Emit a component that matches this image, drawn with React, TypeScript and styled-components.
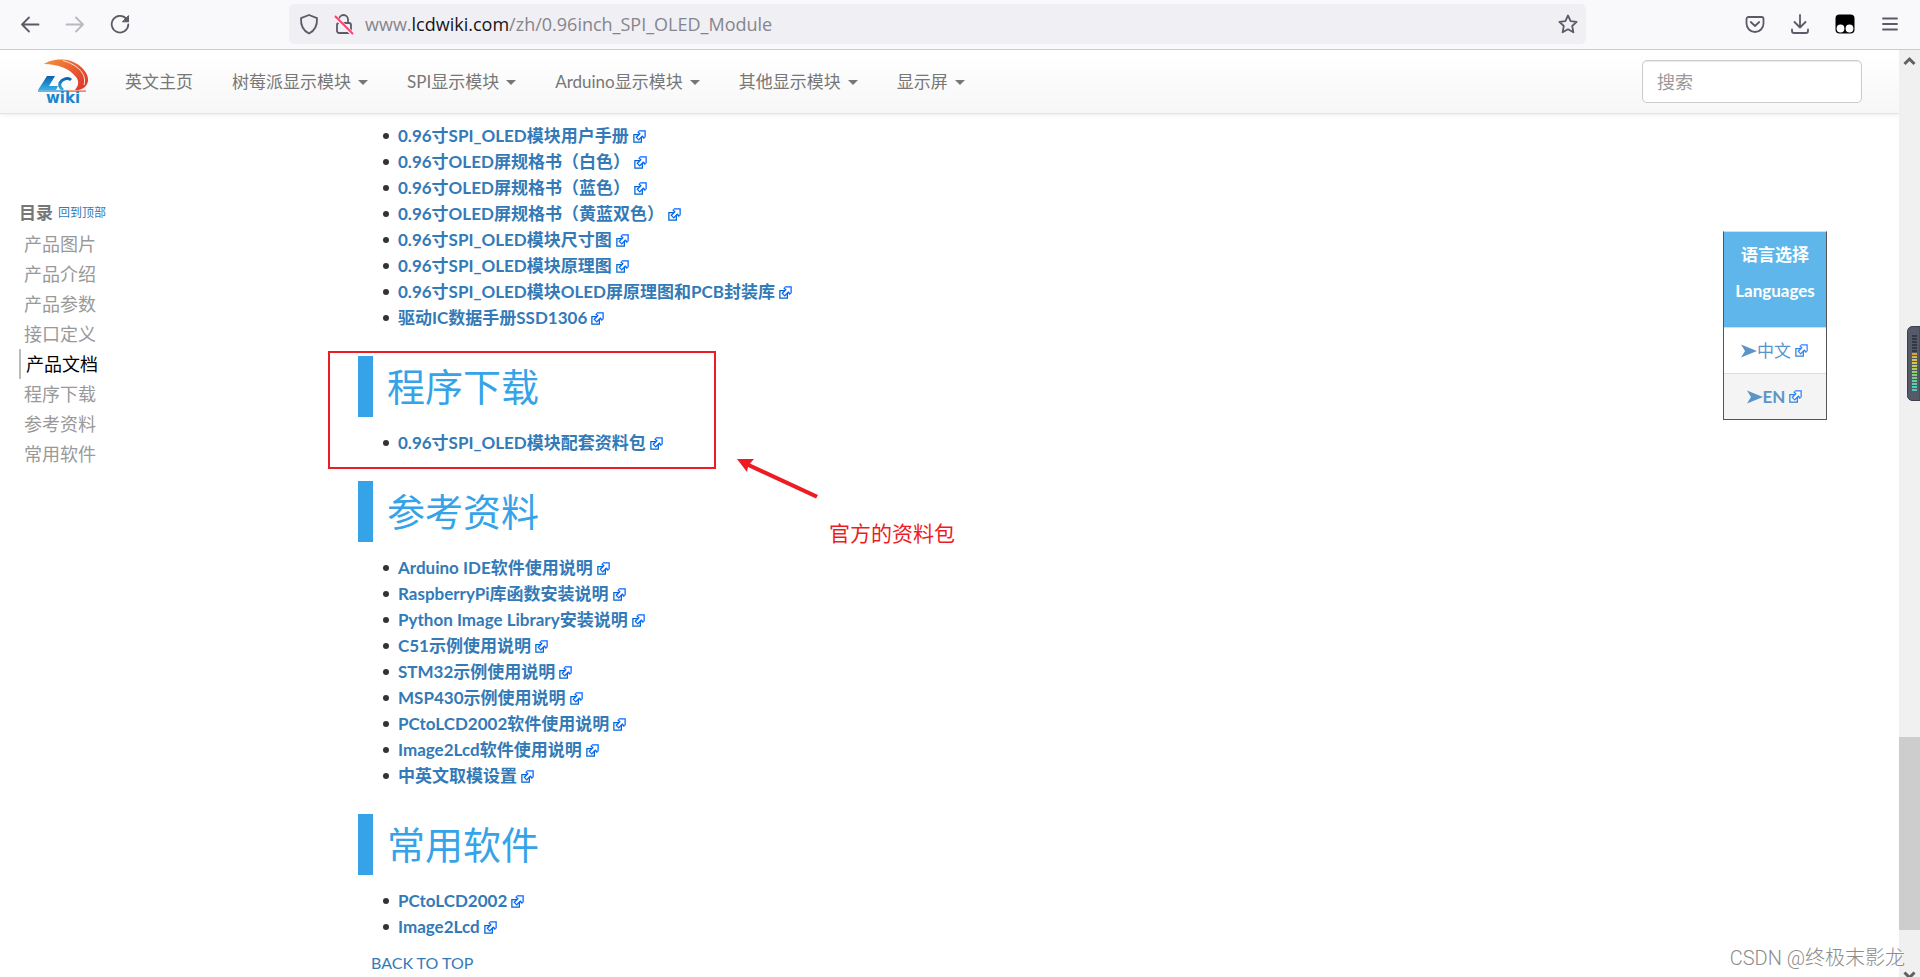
import React from 'react';
import styled, { createGlobalStyle } from 'styled-components';

const GlobalStyle = createGlobalStyle`
  *, *::before, *::after { box-sizing: border-box; }
  body {
    margin: 0;
    background: #fff;
    color: #333;
    font-family: Lato, 'Noto Sans CJK SC', sans-serif;
    font-size: 17px;
    line-height: 26px;
  }
  ul, h1, h2, p { margin: 0; padding: 0; font-weight: inherit; }
  ul { list-style: none; }
  a { color: #337ab7; text-decoration: none; }
  button { border: 0; padding: 0; background: none; font: inherit; color: inherit; cursor: pointer; }
  svg { display: block; }
`;

const Window = styled.div`
  position: relative;
  display: flex;
  flex-direction: column;
  height: 100vh;
  overflow: hidden;
`;

/* Browser toolbar */

const Toolbar = styled.header`
  display: flex;
  flex: none;
  align-items: center;
  height: 50px;
  padding: 0 20px 2px;
  background: #f9f9fb;
  border-bottom: 1px solid #ccc;
  color: #5b5b66;
`;

const ToolGroup = styled.div<{ $gap: number }>`
  display: flex;
  align-items: center;
  gap: ${(p) => p.$gap}px;
`;

const IconButton = styled.button<{ $faded?: boolean }>`
  width: 20px;
  height: 20px;
  opacity: ${(p) => (p.$faded ? 0.4 : 1)};
`;

const AddressBar = styled.div`
  display: flex;
  flex: 1;
  align-items: center;
  gap: 15px;
  height: 40px;
  margin: 0 159px 0 159px;
  padding: 0 8px 0 10px;
  border-radius: 5px;
  background: #f0eff4;
`;

const Address = styled.div`
  flex: 1;
  margin-left: -4px;
  font-family: 'Open Sans', sans-serif;
  font-size: 18px;
  color: #85858d;
  b { font-weight: 400; color: #15141a; }
`;

/* Page frame */

const Viewport = styled.div`
  display: flex;
  flex: 1;
  min-height: 0;
`;

const Page = styled.div`
  flex: 1;
  min-width: 0;
  overflow: hidden;
`;

const Scrollbar = styled.div`
  display: flex;
  flex-direction: column;
  align-items: center;
  width: 21px;
  padding-top: 6px;
  background: #f0f0f0;
  color: #606060;
`;

const Track = styled.div`
  display: flex;
  flex-direction: column;
  flex: 1;
  width: 100%;
  padding-bottom: 41px;
`;

const Thumb = styled.div`
  height: 193px;
  margin-top: auto;
  background: #cdcdcd;
`;

const TrackEnd = styled.div`
  margin-bottom: -4px;
`;

/* Site navigation */

const SiteNav = styled.nav`
  position: relative;
  display: flex;
  align-items: center;
  height: 64px;
  padding: 0 37px 0 36px;
  border-bottom: 1px solid #e4e4e4;
  background: linear-gradient(#fff, #f7f7f7);
  box-shadow: 0 1px 5px rgba(0, 0, 0, 0.08);
`;

const Menu = styled.ul`
  display: flex;
  gap: 39px;
  margin-left: 35px;
`;

const MenuLink = styled.a`
  display: flex;
  align-items: center;
  gap: 7px;
  color: #777;
`;

const Caret = styled.span`
  border: 5px solid transparent;
  border-top-color: #777;
  border-bottom: 0;
  margin-top: 2px;
`;

const Search = styled.input`
  width: 220px;
  height: 43px;
  margin-left: auto;
  padding: 0 14px;
  border: 1px solid #ccc;
  border-radius: 5px;
  background: #fff;
  box-shadow: inset 0 1px 1px rgba(0, 0, 0, 0.08);
  font: inherit;
  font-size: 18px;
  color: #555;
  &::placeholder { color: #999; opacity: 1; }
`;

/* Contents */

const Columns = styled.div`
  display: grid;
  grid-template-columns: 339px 1fr 104px;
  padding: 0 72px 0 19px;
`;

const Toc = styled.nav`
  padding-top: 85px;
`;

const TocTitle = styled.div`
  display: flex;
  align-items: center;
  gap: 5px;
  height: 28px;
  margin-bottom: 2px;
  color: #777;
  a { font-size: 12px; }
`;

const TocItem = styled.li<{ $active?: boolean }>`
  height: 30px;
  font-size: 18px;
  line-height: 30px;
  padding-left: 5px;
  border-left: ${(p) => (p.$active ? '2px solid #bbb' : '0')};
  a { color: ${(p) => (p.$active ? '#000' : '#999')}; }
`;

const Article = styled.main`
  padding-top: 9px;
`;

const Section = styled.section`
  position: relative;
  padding-top: 25px;
`;

const SectionTitle = styled.h2`
  height: 61px;
  margin-bottom: 13px;
  padding-left: 14px;
  border-left: 15px solid #36a3e8;
  font-size: 38px;
  line-height: 61px;
  font-weight: 400;
  color: #36a3e8;
`;

const Entry = styled.li`
  display: flex;
  align-items: center;
  height: 26px;
  padding-left: 25px;
  font-weight: 700;
  &::before {
    content: '';
    width: 6px;
    height: 6px;
    margin-right: 9px;
    border-radius: 50%;
    background: #333;
  }
`;

const ExternalLink = styled.a`
  display: flex;
  align-items: center;
  gap: 3px;
`;

const BackToTop = styled.a`
  display: block;
  margin: 10px 0 0 13px;
  font-size: 16px;
`;

/* Red annotations over the article */

const Frame = styled.div`
  position: absolute;
  top: 20px;
  left: -30px;
  width: 388px;
  height: 118px;
  border: 2px solid #ed1c24;
  pointer-events: none;
`;

const Pointer = styled.svg`
  position: absolute;
  top: 126px;
  left: 378px;
`;

const Note = styled.p`
  position: absolute;
  top: 189px;
  left: 471px;
  font-size: 21px;
  color: #ed1c24;
  white-space: nowrap;
`;

/* Language picker */

const Languages = styled.aside`
  align-self: start;
  margin-top: 117px;
  border: 1px solid #555;
  border-top-color: #ddd;
`;

const LanguagesTitle = styled.h2`
  height: 95px;
  padding-top: 5px;
  background: #5eb6eb;
  color: #fff;
  font-size: 17px;
  font-weight: 700;
  line-height: 36px;
  text-align: center;
`;

const Language = styled.a<{ $current?: boolean }>`
  display: flex;
  align-items: center;
  justify-content: center;
  height: 46px;
  border-top: 1px solid #ddd;
  background: ${(p) => (p.$current ? '#f4f4f4' : '#fff')};
  color: #5b95c7;
  font-weight: ${(p) => (p.$current ? 700 : 400)};
  svg:last-child { margin-left: 3px; opacity: 0.8; }
`;

const Meter = styled.div`
  position: absolute;
  top: 326px;
  right: 0;
`;

const Watermark = styled.div`
  position: absolute;
  right: 15px;
  bottom: 6px;
  font-family: Roboto, 'Noto Sans CJK SC', sans-serif;
  font-size: 20px;
  font-weight: 300;
  color: #8c8c8c;
  text-shadow: -1px -1px 0 #fff;
`;

const stroke = {
  fill: 'none',
  stroke: 'currentColor',
  strokeWidth: 1.8,
  strokeLinecap: 'round' as const,
  strokeLinejoin: 'round' as const,
};

const BackIcon = () => (
  <svg width="20" height="20" viewBox="0 0 20 20" {...stroke}>
    <path d="M18.5 10.5H2M9 3.5l-7 7 7 7" />
  </svg>
);

const ForwardIcon = () => (
  <svg width="20" height="20" viewBox="0 0 20 20" {...stroke}>
    <path d="M1.500 10.500H18M11 3.500l7 7-7 7" />
  </svg>
);

const ReloadIcon = () => (
  <svg width="20" height="20" viewBox="0 0 20 20" {...stroke}>
    <path d="M16.300 4.800A8.300 8.300 0 1 0 18.300 10.500" />
    <path d="M18.500 2v5.800h-5.800z" fill="currentColor" strokeWidth="1" />
  </svg>
);

const ShieldIcon = () => (
  <svg width="20" height="22" viewBox="0 0 20 22" {...stroke}>
    <path d="M10 2L2 5.200c-.3 6 1.200 12 8 15.300 6.800-3.300 8.300-9.300 8-15.300z" />
  </svg>
);

const LockIcon = () => (
  <svg width="20" height="22" viewBox="0 0 20 22" {...stroke}>
    <path d="M5 10V6.500a4.500 4.500 0 0 1 9 0V10" />
    <rect x="3" y="10" width="14" height="10" rx="2" />
    <path d="M1 4l17 16.500" stroke="#f0eff4" strokeWidth="4" />
    <path d="M1.500 3.500l17 17" stroke="#ff3b6b" />
  </svg>
);

const StarIcon = () => (
  <svg width="20" height="20" viewBox="0 0 20 20" {...stroke}>
    <path d="M10 1.500l2.600 5.600 6 .7-4.400 4.200 1.200 6.300L10 15.200l-5.400 3.100L5.800 12 1.400 7.800l6-.7z" />
  </svg>
);

const PocketIcon = () => (
  <svg width="20" height="20" viewBox="0 0 20 20" {...stroke}>
    <path d="M3.500 3h13a2 2 0 0 1 2 2v4.500a8.500 8.500 0 0 1-17 0V5a2 2 0 0 1 2-2z" />
    <path d="M5.800 8l4.200 4 4.200-4" />
  </svg>
);

const DownloadIcon = () => (
  <svg width="20" height="20" viewBox="0 0 20 20" {...stroke}>
    <path d="M10 .9v12M4.500 8l5.500 5.500L15.500 8M2 15.500v1.500a2 2 0 0 0 2 2h12a2 2 0 0 0 2-2v-1.500" />
  </svg>
);

const ExtensionIcon = () => (
  <svg width="20" height="20" viewBox="0 0 20 20">
    <rect x=".5" y=".5" width="19" height="19" rx="4" fill="#000" />
    <circle cx="5.500" cy="14.500" r="3.900" fill="#fff" />
    <circle cx="14.500" cy="14.500" r="3.900" fill="#fff" />
  </svg>
);

const MenuIcon = () => (
  <svg width="20" height="20" viewBox="0 0 20 20" {...stroke}>
    <path d="M3 4.500h14M3 10h14M3 15.500h14" />
  </svg>
);

const Chevron = ({ down }: { down?: boolean }) => (
  <svg width="13" height="10" viewBox="0 0 13 10" fill="none" stroke="currentColor" strokeWidth="3">
    <path d={down ? 'M1.500 1.500l5 5 5-5' : 'M1.500 8l5-5 5 5'} />
  </svg>
);

const ExternalIcon = () => (
  <svg width="15" height="15" viewBox="0 0 12 12">
    <path fill="#fff" stroke="#06c" d="M1.500 4.518h5.982V10.500H1.500z" />
    <path fill="#06f" d="M5.765 1H11v5.390L9.427 7.937l-1.310-1.310L5.393 9.350l-2.690-2.688 2.810-2.808L4.200 2.544z" />
    <path fill="#fff" d="M9.995 2.004l.022 4.885L8.200 5.070 5.320 7.950 4.090 6.723l2.882-2.880-1.850-1.852z" />
  </svg>
);

const ArrowIcon = () => (
  <svg width="16" height="14" viewBox="0 0 16 14" fill="currentColor">
    <path d="M0 .5L16 7 0 13.500 4 7z" />
  </svg>
);

const Logo = () => (
  <svg width="54" height="50" viewBox="0 -2 54 50" role="img" aria-label="LCD wiki">
    <defs>
      <linearGradient id="swoosh" x1="0" y1="0" x2="1" y2="1">
        <stop offset="0" stopColor="#f0963a" />
        <stop offset=".6" stopColor="#e8502f" />
        <stop offset="1" stopColor="#d9322e" />
      </linearGradient>
      <linearGradient id="letters" x1="0" y1="0" x2="0" y2="1">
        <stop offset="0" stopColor="#0b62b0" />
        <stop offset="1" stopColor="#35b1e6" />
      </linearGradient>
    </defs>
    <path fill="url(#swoosh)" d="M8 5C14 1 25-1 35 2c11 4 18 13 17 20-1 6-6 9-14 10 4-4 6-9 2-14C34 10 22 5 8 5z" />
    <path fill="none" stroke="#fbe3da" strokeWidth="1" d="M27 1.500C42 6 51 15 48 26" />
    <path fill="url(#letters)" d="M11 17h8l-6 10h9l-2 4H2z" />
    <path fill="none" stroke="url(#letters)" strokeWidth="3" d="M35 21c-3-3-9-1-11 3-1 3 0 5 3 7" />
    <path fill="#6fb4df" d="M2 31h48v2H2z" />
    <path fill="#f2a48c" d="M32 31h18v1H32z" />
    <text x="10" y="44" fill="#1c86cc" fontFamily="'DejaVu Sans', sans-serif" fontWeight="700" fontSize="15">wiki</text>
  </svg>
);

const meterColors = [
  '#343845', '#343845', '#343845', '#343845', '#343845', '#343845', '#d9a441', '#d8b548', '#d3c24e', '#cdc957',
  '#bccb60', '#a9cc68', '#97cd71', '#84ce7c', '#74ce8a', '#66ce98', '#5acea6', '#50ccb2', '#4bcaba',
];

const MeterIcon = () => (
  <svg width="13" height="75" viewBox="0 0 13 75">
    <path fill="#555a69" stroke="#3c404d" d="M13 .5H6a5 5 0 0 0-5.500 5v63a5 5 0 0 0 5.500 6h7z" />
    {meterColors.map((c, i) => (
      <rect key={i} x="5" y={9 + i * 3} width="5" height="2" fill={c} />
    ))}
  </svg>
);

const menuItems = ['英文主页', '树莓派显示模块', 'SPI显示模块', 'Arduino显示模块', '其他显示模块', '显示屏'];
const tocItems = ['产品图片', '产品介绍', '产品参数', '接口定义', '产品文档', '程序下载', '参考资料', '常用软件'];

const documents = [
  '0.96寸SPI_OLED模块用户手册',
  '0.96寸OLED屏规格书（白色）',
  '0.96寸OLED屏规格书（蓝色）',
  '0.96寸OLED屏规格书（黄蓝双色）',
  '0.96寸SPI_OLED模块尺寸图',
  '0.96寸SPI_OLED模块原理图',
  '0.96寸SPI_OLED模块OLED屏原理图和PCB封装库',
  '驱动IC数据手册SSD1306',
];

const references = [
  'Arduino IDE软件使用说明',
  'RaspberryPi库函数安装说明',
  'Python Image Library安装说明',
  'C51示例使用说明',
  'STM32示例使用说明',
  'MSP430示例使用说明',
  'PCtoLCD2002软件使用说明',
  'Image2Lcd软件使用说明',
  '中英文取模设置',
];

const LinkList = ({ items }: { items: string[] }) => (
  <ul>
    {items.map((item) => (
      <Entry key={item}>
        <ExternalLink href="#">
          {item}
          <ExternalIcon />
        </ExternalLink>
      </Entry>
    ))}
  </ul>
);

export default function App() {
  return (
    <Window>
      <GlobalStyle />
      <Toolbar>
        <ToolGroup $gap={25}>
          <IconButton aria-label="Back"><BackIcon /></IconButton>
          <IconButton aria-label="Forward" $faded><ForwardIcon /></IconButton>
          <IconButton aria-label="Reload"><ReloadIcon /></IconButton>
        </ToolGroup>
        <AddressBar>
          <ShieldIcon />
          <LockIcon />
          <Address>www.<b>lcdwiki.com</b>/zh/0.96inch_SPI_OLED_Module</Address>
          <IconButton aria-label="Bookmark"><StarIcon /></IconButton>
        </AddressBar>
        <ToolGroup $gap={25}>
          <IconButton aria-label="Pocket"><PocketIcon /></IconButton>
          <IconButton aria-label="Downloads"><DownloadIcon /></IconButton>
          <IconButton aria-label="Extension"><ExtensionIcon /></IconButton>
          <IconButton aria-label="Menu"><MenuIcon /></IconButton>
        </ToolGroup>
      </Toolbar>

      <Viewport>
        <Page>
          <SiteNav>
            <a href="#"><Logo /></a>
            <Menu>
              {menuItems.map((item, i) => (
                <li key={item}>
                  <MenuLink href="#">
                    {item}
                    {i > 0 && <Caret />}
                  </MenuLink>
                </li>
              ))}
            </Menu>
            <Search type="search" aria-label="搜索" placeholder="搜索" />
          </SiteNav>

          <Columns>
            <Toc>
              <TocTitle><b>目录</b><a href="#">回到顶部</a></TocTitle>
              <ul>
                {tocItems.map((item) => (
                  <TocItem key={item} $active={item === '产品文档'}>
                    <a href="#">{item}</a>
                  </TocItem>
                ))}
              </ul>
            </Toc>

            <Article>
              <LinkList items={documents} />
              <Section>
                <SectionTitle>程序下载</SectionTitle>
                <LinkList items={['0.96寸SPI_OLED模块配套资料包']} />
                <Frame />
                <Pointer width="84" height="42" viewBox="0 0 84 42" fill="#ed1c24">
                  <path d="M1 2l17 0-4 4.500L82 38l-2 3.500L12 10l-1 5z" />
                </Pointer>
                <Note>官方的资料包</Note>
              </Section>
              <Section>
                <SectionTitle>参考资料</SectionTitle>
                <LinkList items={references} />
              </Section>
              <Section>
                <SectionTitle>常用软件</SectionTitle>
                <LinkList items={['PCtoLCD2002', 'Image2Lcd']} />
              </Section>
              <BackToTop href="#">BACK TO TOP</BackToTop>
            </Article>

            <Languages>
              <LanguagesTitle>语言选择<br />Languages</LanguagesTitle>
              <Language href="#"><ArrowIcon />中文<ExternalIcon /></Language>
              <Language href="#" $current><ArrowIcon />EN<ExternalIcon /></Language>
            </Languages>
          </Columns>
        </Page>
        <Scrollbar>
          <Chevron />
          <Track><Thumb /></Track>
          <TrackEnd><Chevron down /></TrackEnd>
        </Scrollbar>
      </Viewport>

      <Meter><MeterIcon /></Meter>
      <Watermark>CSDN @终极末影龙</Watermark>
    </Window>
  );
}
